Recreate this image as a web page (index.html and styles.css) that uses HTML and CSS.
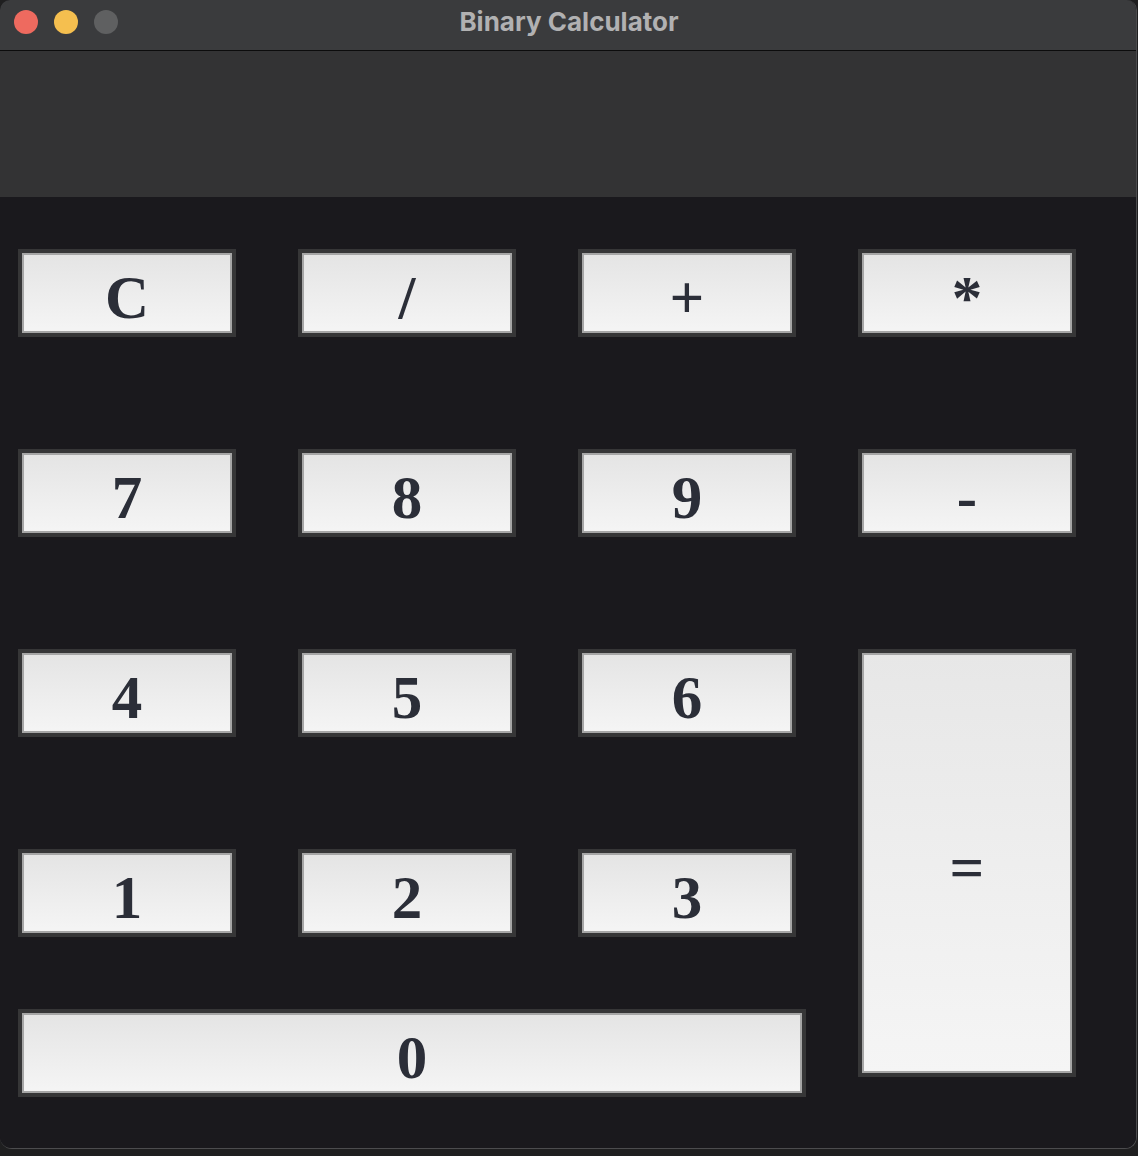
FILE: index.html
```html
<!DOCTYPE html>
<html>
<head>
<meta charset="utf-8">
<title>Binary Calculator</title>
<link rel="stylesheet" href="styles.css">
</head>
<body>
<div class="window">
  <div class="titlebar">
    <div class="lights">
      <span class="light red"></span>
      <span class="light yellow"></span>
      <span class="light gray"></span>
    </div>
    <div class="title">Binary Calculator</div>
  </div>
  <div class="display"></div>
  <div class="keypad">
    <button class="key row1">C</button>
    <button class="key row1">/</button>
    <button class="key row1">+</button>
    <button class="key row1 star">*</button>
    <button class="key row2">7</button>
    <button class="key row2">8</button>
    <button class="key row2">9</button>
    <button class="key row2">-</button>
    <button class="key row3">4</button>
    <button class="key row3">5</button>
    <button class="key row3">6</button>
    <button class="key equals">=</button>
    <button class="key row4">1</button>
    <button class="key row4">2</button>
    <button class="key row4">3</button>
    <button class="key row5 zero">0</button>
  </div>
</div>
</body>
</html>
```

FILE: styles.css
```css
html, body {
  margin: 0;
  padding: 0;
  background: #1f1f20;
}

.window {
  width: 1136px;
  height: 1148px;
  display: flex;
  flex-direction: column;
  border-radius: 10px 10px 12px 12px;
  overflow: hidden;
  border-right: 1px solid #4c4c4e;
  border-bottom: 1px solid #4c4c4e;
  background: #1a191d;
}

.titlebar {
  position: relative;
  height: 50px;
  flex: 0 0 50px;
  background: #3a3b3d;
  border-bottom: 1px solid #0c0c0c;
  display: flex;
  align-items: center;
  justify-content: center;
}

.lights {
  position: absolute;
  left: 14px;
  top: 10px;
  display: flex;
  gap: 16px;
}

.light {
  width: 24px;
  height: 24px;
  border-radius: 50%;
  display: block;
}

.red { background: #ee6a5f; }
.yellow { background: #f5bf4f; }
.gray { background: #5f6061; }

.title {
  font-family: "Inter", "Liberation Sans", sans-serif;
  font-weight: 700;
  font-size: 26px;
  color: #b1b1b2;
  margin-top: -8px;
  margin-left: 2px;
}

.display {
  flex: 0 0 146px;
  background: #333334;
}

.keypad {
  flex: 1;
  background: #1a191d;
  padding: 52px 0 0 18px;
  display: grid;
  grid-template-columns: repeat(4, 218px);
  column-gap: 62px;
  grid-template-rows: 88px 112px 88px 112px 88px 112px 88px 72px 88px;
}

.key {
  box-sizing: border-box;
  margin: 0;
  padding: 8px 0 0 0;
  border: 4px solid #363637;
  box-shadow: inset 0 0 0 2px #a6a6a6;
  background: linear-gradient(#e4e4e4, #f5f5f5);
  font-family: "Liberation Serif", "Times New Roman", serif;
  font-weight: 700;
  font-size: 61px;
  line-height: 1;
  color: #2b2e38;
  display: flex;
  align-items: center;
  justify-content: center;
}

.row1 { grid-row: 1; }
.row2 { grid-row: 3; }
.row3 { grid-row: 5; }
.row4 { grid-row: 7; }
.row5 { grid-row: 9; }

.star {
  padding-top: 8px;
}

.equals {
  grid-row: 5 / span 5;
  grid-column: 4;
  align-self: start;
  height: 428px;
  background: linear-gradient(#e7e7e7, #f5f5f5);
}

.zero {
  grid-column: 1 / span 3;
  justify-self: start;
  width: 788px;
}
```
